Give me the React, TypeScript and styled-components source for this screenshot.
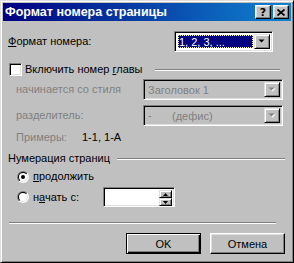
import React from 'react';
import styled, { createGlobalStyle } from 'styled-components';

const Global = createGlobalStyle`
  html, body { margin: 0; padding: 0; background: #c0c0c0; }
  body { font-family: "Liberation Sans", Arial, sans-serif; font-size: 11px; color: #000; }
`;

const Window = styled.div`
  box-sizing: border-box;
  width: 294px;
  height: 263px;
  background: #c0c0c0;
  border: 1px solid;
  border-color: #dfdfdf #000 #000 #dfdfdf;
  box-shadow: inset 1px 1px #fff, inset -1px -1px #808080;
  padding: 2px;
  display: flex;
  flex-direction: column;
`;

const TitleBar = styled.div`
  flex: none;
  height: 18px;
  background: linear-gradient(to right, #000080, #1084d0);
  display: flex;
  align-items: center;
  padding: 0 2px;
`;

const Title = styled.span`
  flex: 1;
  color: #fff;
  font: bold 12.5px "Liberation Sans", Arial, sans-serif;
  white-space: nowrap;
  line-height: 18px;
`;

const TitleButtons = styled.div`
  display: flex;
  gap: 2px;
`;

const TitleButton = styled.div`
  box-sizing: border-box;
  width: 16px;
  height: 14px;
  background: #c0c0c0;
  border: 1px solid;
  border-color: #fff #000 #000 #fff;
  box-shadow: inset -1px -1px #808080, inset 1px 1px #dfdfdf;
  display: flex;
  align-items: center;
  justify-content: center;
  font: bold 11px "DejaVu Sans", sans-serif;
  line-height: 1;
`;

const Body = styled.div`
  display: flex;
  flex-direction: column;
  padding: 0 5px;
`;

const Row = styled.div<{ $mt: number; $h?: number; $indent?: number }>`
  display: flex;
  align-items: center;
  margin-top: ${p => p.$mt}px;
  height: ${p => (p.$h ? `${p.$h}px` : 'auto')};
  padding-left: ${p => p.$indent ?? 0}px;
  white-space: nowrap;
`;

const Label = styled.span<{ $w?: number; $disabled?: boolean; $ml?: number }>`
  flex: none;
  width: ${p => (p.$w ? `${p.$w}px` : 'auto')};
  margin-left: ${p => p.$ml ?? 0}px;
  color: ${p => (p.$disabled ? '#808080' : '#000')};
  line-height: 13px;
`;

const Key = styled.span`
  text-decoration: underline;
  text-underline-offset: 1px;
`;

const Sunken = styled.div<{ $w: number; $h: number; $disabled?: boolean }>`
  box-sizing: border-box;
  flex: none;
  width: ${p => p.$w}px;
  height: ${p => p.$h}px;
  border: 1px solid;
  border-color: #808080 #fff #fff #808080;
  box-shadow: inset 1px 1px #000, inset -1px -1px #dfdfdf;
  padding: 2px;
  background: ${p => (p.$disabled ? '#c0c0c0' : '#fff')};
  display: flex;
  align-items: stretch;
`;

const ComboValue = styled.div<{ $disabled?: boolean }>`
  flex: 1;
  display: flex;
  align-items: center;
  padding-left: 2px;
  color: ${p => (p.$disabled ? '#808080' : '#000')};
  overflow: hidden;
`;

const Selected = styled.div`
  flex: 1;
  margin: 1px;
  background: #000080;
  color: #fff;
  outline: 1px dotted #ffffa0;
  outline-offset: -1px;
  display: flex;
  align-items: center;
  padding-left: 1px;
`;

const Raised = styled.div<{ $w: number; $h?: number }>`
  box-sizing: border-box;
  flex: none;
  width: ${p => p.$w}px;
  height: ${p => (p.$h ? `${p.$h}px` : 'auto')};
  background: #c0c0c0;
  border: 1px solid;
  border-color: #dfdfdf #000 #000 #dfdfdf;
  box-shadow: inset 1px 1px #fff, inset -1px -1px #808080;
  display: flex;
  align-items: center;
  justify-content: center;
`;

const SpinColumn = styled.div`
  margin-left: auto;
  display: flex;
  flex-direction: column;
`;

const Separator = styled.div<{ $ml?: number; $mr?: number }>`
  flex: 1;
  height: 0;
  border-top: 1px solid #808080;
  border-bottom: 1px solid #fff;
  margin-left: ${p => p.$ml ?? 0}px;
  margin-right: ${p => p.$mr ?? 0}px;
`;

const Checkbox = styled.div`
  box-sizing: border-box;
  flex: none;
  width: 13px;
  height: 13px;
  margin-left: 1px;
  background: #fff;
  border: 1px solid;
  border-color: #808080 #fff #fff #808080;
  box-shadow: inset 1px 1px #000, inset -1px -1px #dfdfdf;
`;

const ButtonRow = styled.div`
  display: flex;
  justify-content: flex-end;
  gap: 9px;
  margin-top: 9px;
  padding-right: 1px;
`;

const Button = styled.div<{ $default?: boolean }>`
  box-sizing: border-box;
  width: 75px;
  height: 21px;
  background: #c0c0c0;
  display: flex;
  align-items: center;
  justify-content: center;
  border: 1px solid;
  border-color: ${p => (p.$default ? '#000' : '#fff #000 #000 #fff')};
  box-shadow: ${p =>
    p.$default
      ? 'inset 1px 1px #fff, inset -1px -1px #000, inset -2px -2px #808080'
      : 'inset -1px -1px #808080, inset 1px 1px #dfdfdf'};
`;

const Arrow = ({ disabled }: { disabled?: boolean }) => (
  <svg width="8" height="5" viewBox="0 0 8 5" style={{ display: 'block' }}>
    {disabled && <polygon points="1.5,1.5 7.5,1.5 4.5,4.5" fill="#fff" />}
    <polygon points="0.5,0.5 6.5,0.5 3.5,3.5" fill={disabled ? '#808080' : '#000'} />
  </svg>
);

const SmallArrow = ({ up }: { up?: boolean }) => (
  <svg width="5" height="3" viewBox="0 0 5 3" style={{ display: 'block' }}>
    <polygon points={up ? '2.5,0 5,3 0,3' : '0,0 5,0 2.5,3'} fill="#000" />
  </svg>
);

const Radio = ({ checked }: { checked?: boolean }) => (
  <svg width="12" height="12" viewBox="0 0 12 12" style={{ display: 'block', flex: 'none' }}>
    <defs>
      <linearGradient id="rOuter" x1="0" y1="0" x2="1" y2="1">
        <stop offset="0.5" stopColor="#808080" />
        <stop offset="0.5" stopColor="#fff" />
      </linearGradient>
      <linearGradient id="rInner" x1="0" y1="0" x2="1" y2="1">
        <stop offset="0.5" stopColor="#000" />
        <stop offset="0.5" stopColor="#dfdfdf" />
      </linearGradient>
    </defs>
    <circle cx="6" cy="6" r="6" fill="url(#rOuter)" />
    <circle cx="6" cy="6" r="5" fill="url(#rInner)" />
    <circle cx="6" cy="6" r="4" fill="#fff" />
    {checked && <circle cx="6" cy="6" r="2" fill="#000" />}
  </svg>
);

const CloseIcon = () => (
  <svg width="8" height="7" viewBox="0 0 8 7" style={{ display: 'block' }}>
    <path d="M0.5 0.5 L7.5 6.5 M7.5 0.5 L0.5 6.5" stroke="#000" strokeWidth="1.7" />
  </svg>
);

export default function App() {
  return (
    <>
      <Global />
      <Window>
        <TitleBar>
          <Title>Формат номера страницы</Title>
          <TitleButtons>
            <TitleButton>?</TitleButton>
            <TitleButton>
              <CloseIcon />
            </TitleButton>
          </TitleButtons>
        </TitleBar>
        <Body>
          <Row $mt={10} $h={21}>
            <Label $w={166}>
              <Key>Ф</Key>ормат номера:
            </Label>
            <Sunken $w={99} $h={21}>
              <Selected>1, 2, 3, ...</Selected>
              <Raised $w={16}>
                <Arrow />
              </Raised>
            </Sunken>
          </Row>

          <Row $mt={11} $h={13}>
            <Checkbox />
            <Label $ml={3}>
              Включить номер <Key>г</Key>лавы
            </Label>
            <Separator $ml={12} $mr={6} />
          </Row>

          <Row $mt={3} $h={21} $indent={8}>
            <Label $w={127} $disabled>
              начинается со стиля
            </Label>
            <Sunken $w={140} $h={21} $disabled>
              <ComboValue $disabled>Заголовок 1</ComboValue>
              <Raised $w={16}>
                <Arrow disabled />
              </Raised>
            </Sunken>
          </Row>

          <Row $mt={5} $h={21} $indent={8}>
            <Label $w={127} $disabled>
              разделитель:
            </Label>
            <Sunken $w={140} $h={21} $disabled>
              <ComboValue $disabled>
                <Label $w={24} $disabled>-</Label>
                <span>(дефис)</span>
              </ComboValue>
              <Raised $w={16}>
                <Arrow disabled />
              </Raised>
            </Sunken>
          </Row>

          <Row $mt={5} $h={13} $indent={8}>
            <Label $w={66} $disabled>
              Примеры:
            </Label>
            <Label>1-1, 1-А</Label>
          </Row>

          <Row $mt={8} $h={13}>
            <Label>Нумерация страниц</Label>
            <Separator $ml={7} $mr={1} />
          </Row>

          <Row $mt={5} $h={13} $indent={9}>
            <Radio checked />
            <Label $ml={4}>
              <Key>п</Key>родолжить
            </Label>
          </Row>

          <Row $mt={4} $h={20} $indent={9}>
            <Radio />
            <Label $ml={4} $w={70}>
              н<Key>а</Key>чать с:
            </Label>
            <Sunken $w={72} $h={20}>
              <SpinColumn>
                <Raised $w={13} $h={8}>
                  <SmallArrow up />
                </Raised>
                <Raised $w={13} $h={8}>
                  <SmallArrow />
                </Raised>
              </SpinColumn>
            </Sunken>
          </Row>

          <Row $mt={15}>
            <Separator $ml={1} $mr={10} />
          </Row>

          <ButtonRow>
            <Button $default>OK</Button>
            <Button>Отмена</Button>
          </ButtonRow>
        </Body>
      </Window>
    </>
  );
}
